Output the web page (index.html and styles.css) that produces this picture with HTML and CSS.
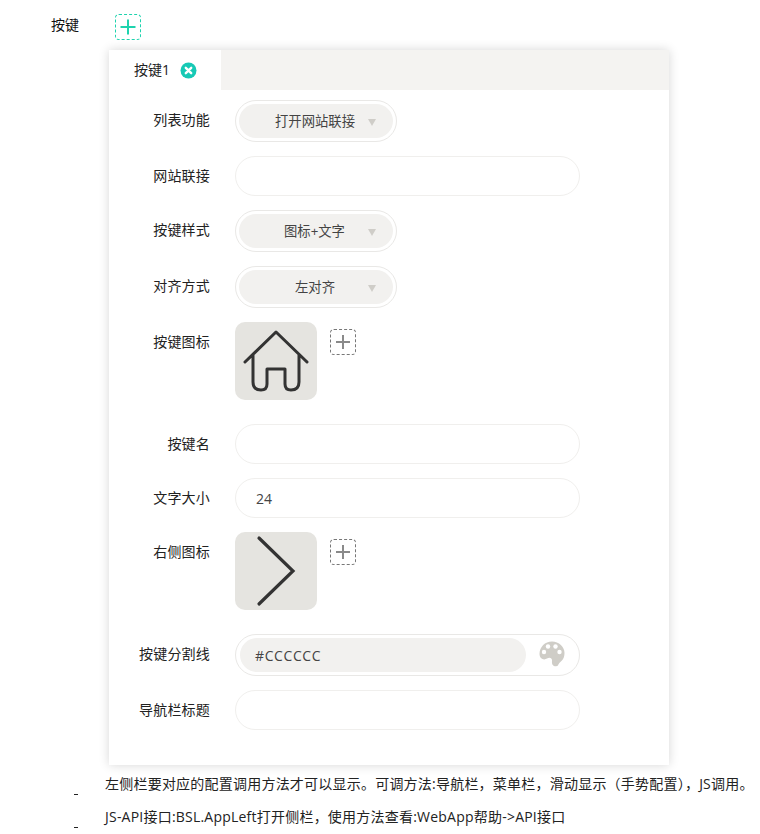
FILE: index.html
```html
<!DOCTYPE html>
<html lang="zh">
<head>
<meta charset="utf-8">
<title>按键</title>
<link rel="stylesheet" href="styles.css">
</head>
<body>
<div class="top">
  <span class="top-label">按键</span>
  <span class="add add-green"><svg width="16" height="16" viewBox="0 0 16 16"><path d="M8 0.5V15.5M0.5 8H15.5" stroke="#1ed3ae" stroke-width="2" fill="none"/></svg></span>
</div>
<section class="card">
  <div class="tabs">
    <div class="tab">按键1
      <svg class="tab-x" width="17" height="17" viewBox="0 0 17 17"><circle cx="8.5" cy="8.5" r="8" fill="#17c9b5"/><path d="M5.8 5.8L11.2 11.2M11.2 5.8L5.8 11.2" stroke="#fff" stroke-width="2.4" stroke-linecap="round"/></svg>
    </div>
  </div>
  <div class="form">
    <div class="row"><label class="lbl">列表功能</label><div class="select"><span class="sel-in"><span class="sel-t t1">打开网站联接</span><i class="caret"></i></span></div></div>
    <div class="row"><label class="lbl">网站联接</label><div class="input"></div></div>
    <div class="row"><label class="lbl">按键样式</label><div class="select"><span class="sel-in"><span class="sel-t t2">图标+文字</span><i class="caret"></i></span></div></div>
    <div class="row"><label class="lbl">对齐方式</label><div class="select"><span class="sel-in"><span class="sel-t t3">左对齐</span><i class="caret"></i></span></div></div>
    <div class="row row-icon"><label class="lbl">按键图标</label>
      <div class="thumb"><svg width="82" height="78" viewBox="0 0 82 78"><path d="M10 40L41 10L72 40M18 33V60Q18 68 26 68H26Q32 68 32 62V47H50V62Q50 68 56 68H56Q64 68 64 60V33" fill="none" stroke="#333" stroke-width="3" stroke-linecap="round" stroke-linejoin="round"/></svg></div>
      <span class="add add-gray"><svg width="14" height="14" viewBox="0 0 14 14"><path d="M7 0V14M0 7H14" stroke="#8a8a8a" stroke-width="2" fill="none"/></svg></span>
    </div>
    <div class="row"><label class="lbl">按键名</label><div class="input"></div></div>
    <div class="row"><label class="lbl">文字大小</label><div class="input"><span class="val">24</span></div></div>
    <div class="row row-icon"><label class="lbl">右侧图标</label>
      <div class="thumb"><svg width="82" height="78" viewBox="0 0 82 78"><path d="M24 6L58 39L24 72" fill="none" stroke="#333" stroke-width="3.2" stroke-linecap="round" stroke-linejoin="miter"/></svg></div>
      <span class="add add-gray"><svg width="14" height="14" viewBox="0 0 14 14"><path d="M7 0V14M0 7H14" stroke="#8a8a8a" stroke-width="2" fill="none"/></svg></span>
    </div>
    <div class="row"><label class="lbl">按键分割线</label>
      <div class="color"><span class="color-in">#CCCCCC</span>
        <svg class="palette" width="26" height="26" viewBox="0 0 26 26"><path d="M13 .5C6 .5.5 6 .5 12.8.5 18 5 19.5 8 17.6c2.4-1.4 5-.8 5 2 0 1.400-.3 2.300.4 3.800 1 2 4.600 2.400 5.500 1.200.8-1.800 1.800-3.100 3.800-4.800 1.900-1.900 2.800-4.600 2.800-7.800C25.500 6 20 .5 13 .5Z" fill="#cfcdc7"/><g fill="#fff"><circle cx="9" cy="5.500" r="2.200"/><circle cx="16.500" cy="5.500" r="2.200"/><circle cx="5" cy="11" r="2.200"/><circle cx="20.500" cy="11" r="2.200"/></g></svg>
      </div>
    </div>
    <div class="row"><label class="lbl">导航栏标题</label><div class="input"></div></div>
  </div>
</section>
<div class="notes">
  <div class="note"><span class="dash"></span><p>左侧栏要对应的配置调用方法才可以显示。可调方法:导航栏，菜单栏，滑动显示（手势配置），JS调用。</p></div>
  <div class="note"><span class="dash"></span><p>JS-API接口:BSL.AppLeft打开侧栏，使用方法查看:WebApp帮助-&gt;API接口</p></div>
</div>
</body>
</html>
```

FILE: styles.css
```css
* { box-sizing: border-box; }
html, body { margin: 0; padding: 0; background: #fff; }
body {
  width: 760px;
  height: 834px;
  overflow: hidden;
  font-family: "Open Sans", "Noto Sans CJK SC", sans-serif;
  font-size: 14px;
  color: #222;
}
.top { display: flex; align-items: flex-start; height: 50px; padding: 15px 0 0 51px; }
.top-label { width: 64px; line-height: 20px; color: #111; }
.add { display: flex; align-items: center; justify-content: center; width: 26px; height: 26px; border-radius: 4px; margin-top: -1px; }
.add-green { border: 1px dashed #1ed3ae; }
.add-gray { border: 1px dashed #777; margin: 7px 0 0 13px; }
.card {
  width: 560px;
  height: 715px;
  margin-left: 109px;
  background: #fff;
  box-shadow: 0 0 10px rgba(0,0,0,.16);
}
.tabs { height: 40px; background: #f4f3f1; }
.tab {
  display: flex;
  align-items: center;
  width: 112px;
  height: 40px;
  padding-left: 25px;
  gap: 10px;
  background: #fff;
  color: #222;
  line-height: 40px;
}
.form { display: flex; flex-direction: column; padding-top: 10px; }
.row { display: flex; align-items: flex-start; margin-bottom: 14px; }
.row-icon { margin-bottom: 24px; }
.lbl { width: 101px; margin-right: 25px; text-align: right; line-height: 18px; padding-top: 11px; color: #222; flex: none; letter-spacing: .2px; }
.select {
  width: 162px;
  height: 42px;
  padding: 3px;
  border: 1px solid #e9e8e6;
  border-radius: 21px;
}
.sel-in {
  position: relative;
  display: flex;
  align-items: center;
  height: 34px;
  background: #f2f1ef;
  border-radius: 17px;
  color: #444;
  padding-left: 36px;
  font-size: 13.33px;
}
.sel-t { display: block; line-height: 34px; }
.t2 { margin-left: 9px; }
.t3 { margin-left: 20px; }
.caret {
  position: absolute;
  right: 17px;
  top: 15px;
  width: 0;
  height: 0;
  border-left: 4px solid transparent;
  border-right: 4px solid transparent;
  border-top: 7px solid #cfcdc8;
}
.input {
  display: flex;
  align-items: center;
  width: 345px;
  height: 40px;
  padding-left: 20px;
  border: 1px solid #f0efed;
  border-radius: 20px;
}
.val { color: #444; }
.thumb { width: 82px; height: 78px; background: #e5e4e0; border-radius: 10px; }
.thumb svg { display: block; }
.color {
  position: relative;
  display: flex;
  width: 345px;
  height: 42px;
  padding: 3px 4px;
  border: 1px solid #e9e8e6;
  border-radius: 21px;
}
.color-in {
  display: flex;
  align-items: center;
  width: 286px;
  height: 34px;
  padding-left: 15px;
  background: #f2f1ef;
  border-radius: 17px;
  color: #444;
  letter-spacing: .6px;
}
.palette { position: absolute; left: 303px; top: 6px; }
.notes { padding-top: 9px; }
.note { display: flex; height: 33px; padding-left: 74px; }
.dash { flex: none; width: 4px; height: 1px; background: #222; margin-top: 20px; margin-right: 27px; }
.note p { margin: 0; line-height: 20px; white-space: nowrap; color: #222; letter-spacing: .22px; }
```
